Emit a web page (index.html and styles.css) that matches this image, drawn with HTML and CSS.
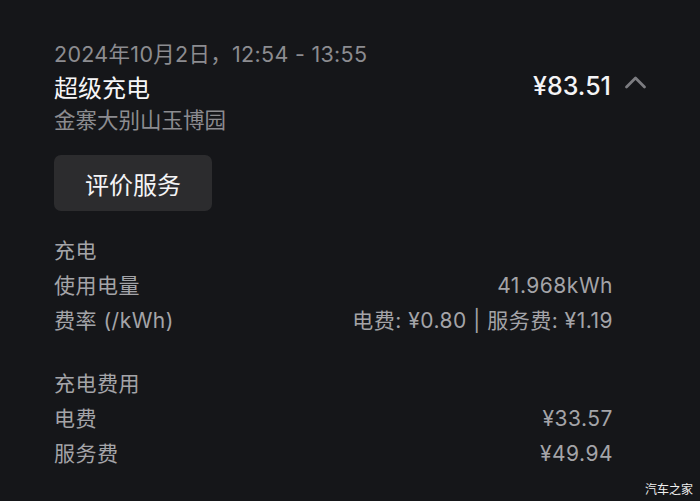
FILE: index.html
```html
<!DOCTYPE html>
<html lang="zh-CN">
<head>
<meta charset="utf-8">
<link rel="stylesheet" href="styles.css">
</head>
<body>
<main class="page">
  <header class="head">
    <div class="date">2024年10月2日，12:54 - 13:55</div>
    <div class="title-row">
      <div class="title">超级充电</div>
      <div class="price-wrap">
        <span class="price">¥83.51</span>
        <svg class="chev" width="23" height="16" viewBox="0 0 23 16"><path d="M2.5 13 L11.5 4 L20.5 13" fill="none" stroke="#7c7c80" stroke-width="2.8" stroke-linecap="round" stroke-linejoin="round"/></svg>
      </div>
    </div>
    <div class="place">金寨大别山玉博园</div>
  </header>
  <button class="btn">评价服务</button>
  <section class="group">
    <div class="row"><span>充电</span></div>
    <div class="row"><span>使用电量</span><span>41.968kWh</span></div>
    <div class="row"><span>费率 (/kWh)</span><span>电费: ¥0.80 | 服务费: ¥1.19</span></div>
  </section>
  <section class="group group2">
    <div class="row"><span>充电费用</span></div>
    <div class="row"><span>电费</span><span>¥33.57</span></div>
    <div class="row"><span>服务费</span><span>¥49.94</span></div>
  </section>
</main>
<div class="mark">汽车之家</div>
</body>
</html>
```
FILE: styles.css
```css
html, body {
  margin: 0;
  background: #151619;
  height: 100%;
  overflow: hidden;
}
body {
  font-family: "Inter", "Noto Sans CJK SC", sans-serif;
  color: #a4a4a8;
  position: relative;
}
.page {
  padding: 39px 87px 0 54px;
}
.date {
  font-size: 21.5px;
  line-height: 30px;
  letter-spacing: 0.3px;
  color: #8c8c90;
}
.title-row {
  display: flex;
  justify-content: space-between;
  align-items: center;
  height: 34px;
  margin-top: 0;
}
.title {
  font-size: 24px;
  color: #f6f6f8;
}
.price-wrap {
  display: flex;
  align-items: center;
  position: relative;
  margin-right: 2px;
}
.price {
  font-size: 25px;
  font-weight: 500;
  color: #f4f4f6;
}
.chev {
  position: absolute;
  left: calc(100% + 13px);
  top: 3px;
}
.place {
  font-size: 21.5px;
  line-height: 28px;
  margin-top: 3px;
  color: #8c8c90;
}
.btn {
  display: block;
  margin-top: 21px;
  width: 158px;
  height: 56px;
  border: 0;
  border-radius: 7px;
  background: #2c2c2e;
  color: #f4f4f6;
  font-family: "Noto Sans CJK SC", sans-serif;
  font-size: 24px;
  padding: 0;
}
.group {
  margin-top: 22px;
}
.group2 {
  margin-top: 28px;
}
.row {
  display: flex;
  justify-content: space-between;
  font-size: 21px;
  letter-spacing: 0.5px;
  line-height: 35px;
  height: 35px;
}
.mark {
  position: absolute;
  right: 7px;
  bottom: 4px;
  font-family: "Noto Sans CJK SC", sans-serif;
  font-size: 12px;
  color: #f0f0f0;
}
```
